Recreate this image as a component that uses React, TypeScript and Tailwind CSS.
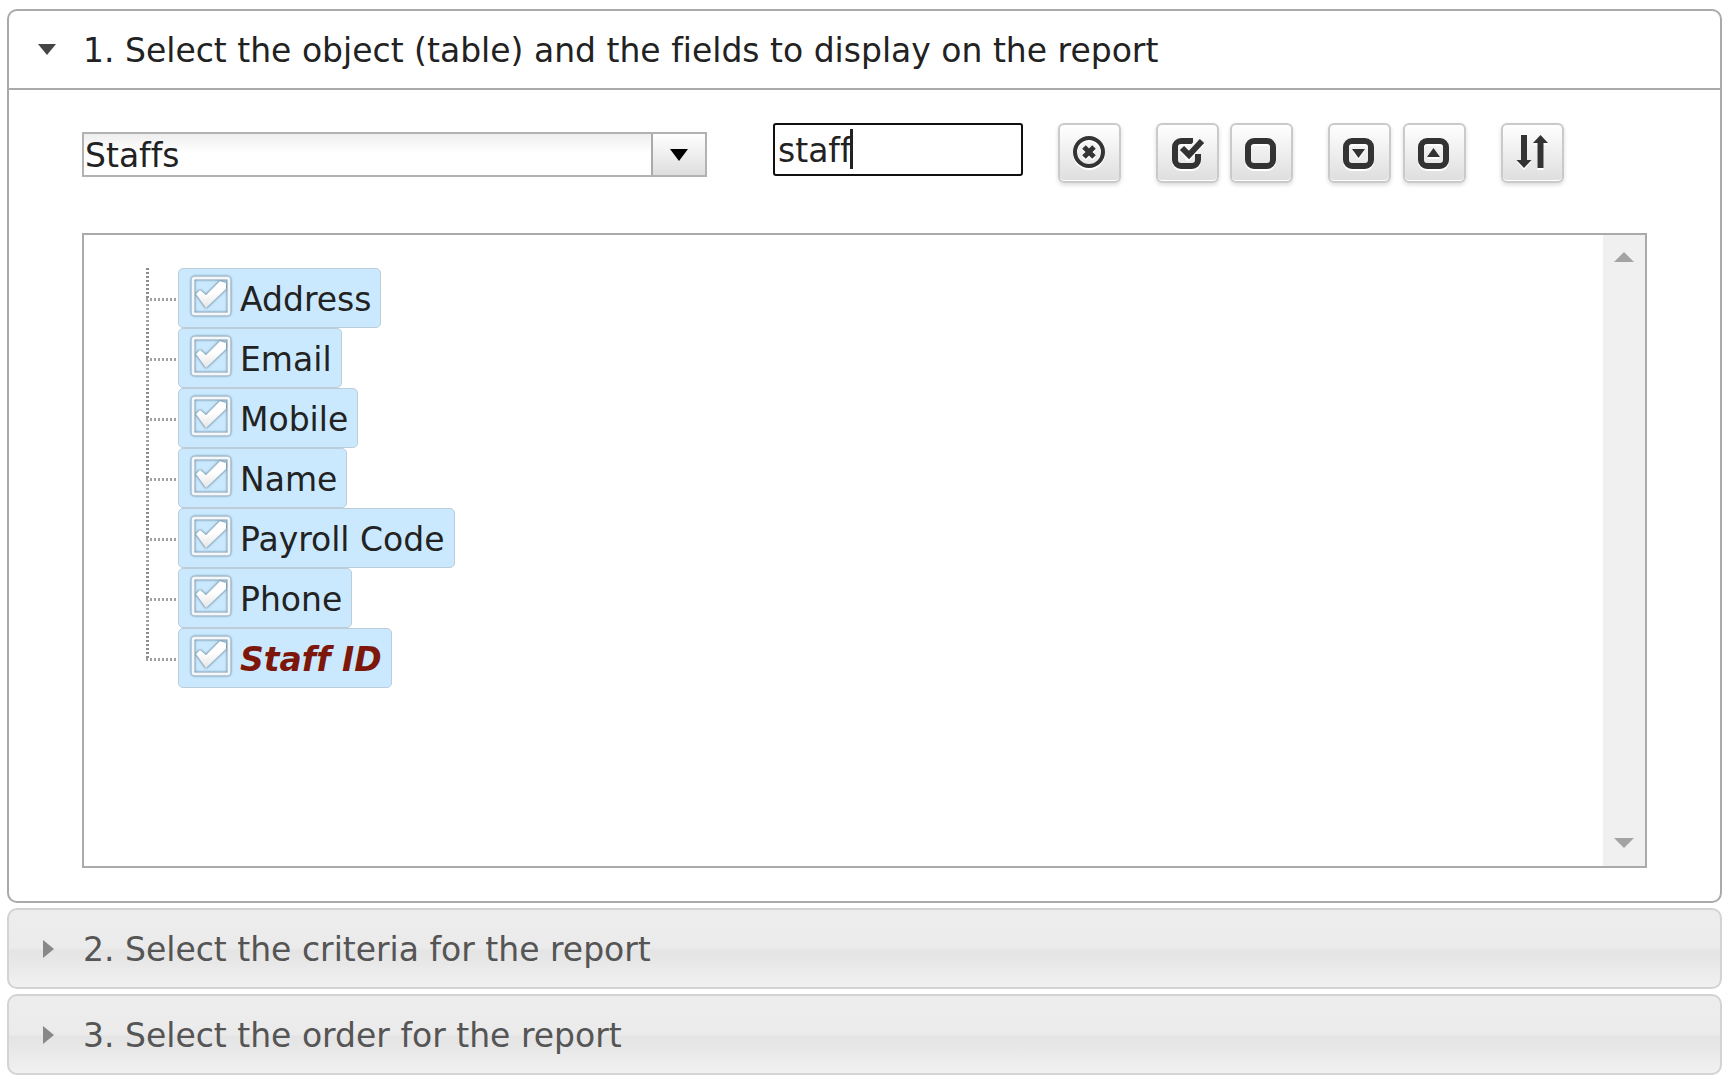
import React from "react";

const ink = "#333333";

function IconButton({ label, className = "", children }: { label: string; className?: string; children: React.ReactNode }) {
  return (
    <button
      type="button"
      aria-label={label}
      className={`flex h-[60px] w-[63px] shrink-0 items-center justify-center rounded-md border-2 border-[#cacaca] bg-linear-to-b from-white to-[#dedede] shadow-[inset_0_-1px_0_#fff,0_2px_4px_rgba(0,0,0,0.14)] ${className}`}
    >
      <svg viewBox="1 0 36 36" className="h-9 w-9 overflow-visible [filter:drop-shadow(0_2px_0_#fff)]" fill="none" stroke={ink}>
        {children}
      </svg>
    </button>
  );
}

function TreeItem({ label, last = false, keyField = false }: { label: string; last?: boolean; keyField?: boolean }) {
  return (
    <li className="flex h-[60px]">
      <svg className="h-[60px] w-[34px] shrink-0" fill="none" strokeWidth="3" aria-hidden="true">
        <path d="M3.500 0V30" stroke="#8c8c8c" strokeDasharray="2 2" />
        {!last && <path d="M3.500 32V60" stroke="#a0a0a0" strokeDasharray="2 2" />}
        <path d="M2 31.500H34" stroke="#a0a0a0" strokeDasharray="2 2" />
      </svg>
      <label className="flex h-[60px] cursor-pointer items-center rounded-[5px] border border-[#bbcdd9] bg-[#cbe9fe] pr-[9px] pl-[11px]">
        <input type="checkbox" defaultChecked className="peer sr-only" />
        <svg viewBox="0 0 42 42" className="mr-2 mb-1 h-[42px] w-[42px] overflow-visible" fill="none" aria-hidden="true">
          <defs>
            <linearGradient id="tick" x1="0" y1="0" x2="0" y2="1">
              <stop offset="0.4" stopColor="#ffffff" />
              <stop offset="1" stopColor="#e6e6e6" />
            </linearGradient>
          </defs>
          <g className="[filter:drop-shadow(0_0_1px_#5f7f97)_drop-shadow(0_0_1px_#8fb0c6)]">
            <rect x="3" y="3" width="36" height="36" rx="2" stroke="#f4f6f7" strokeWidth="3" />
            <path d="M6 19L10 15L16 20L30 6L36 8V14L16 33Z" fill="url(#tick)" />
          </g>
        </svg>
        <span className={keyField ? "mt-1 font-bold italic text-[#7d170b]" : "mt-1"}>{label}</span>
      </label>
    </li>
  );
}

function ClosedSection({ title }: { title: string }) {
  return (
    <section className="mt-[5px]">
      <h3>
        <button
          type="button"
          aria-expanded="false"
          className="flex h-[81px] w-full items-center rounded-[10px] border-2 border-[#d3d3d3] pl-[34px] text-left text-[#555555] [background-image:linear-gradient(#ededed_0%,#ebebeb_49%,#e4e4e4_53%,#e7e7e7_65%,#f1f1f1_100%)]"
        >
          <svg className="mr-[29px] h-[18px] w-[11px]" viewBox="0 0 11 18" aria-hidden="true">
            <path d="M0 0L11 9L0 18Z" fill="#888888" />
          </svg>
          <span className="pt-[2px]">{title}</span>
        </button>
      </h3>
    </section>
  );
}

export default function App() {
  return (
    <main className="bg-white pt-[9px] pr-2 pl-[7px] font-['DejaVu_Sans',sans-serif] text-[33px] leading-10 text-[#222222] [font-variant-ligatures:none]">
      <section className="rounded-[10px] border-2 border-[#aaaaaa]">
        <h3>
          <button type="button" aria-expanded="true" className="flex h-[79px] w-full items-center border-b-2 border-[#aaaaaa] pl-[29px] text-left">
            <svg className="mr-[27px] h-[11px] w-[18px]" viewBox="0 0 18 11" aria-hidden="true">
              <path d="M0 0H18L9 11Z" fill="#454545" />
            </svg>
            <span className="pt-[2px]">1. Select the object (table) and the fields to display on the report</span>
          </button>
        </h3>
        <div className="px-[73px] pt-[33px] pb-[33px]">
          <div className="flex items-start">
            <div className="relative mt-[9px] w-[625px] shrink-0">
              <select
                aria-label="Object"
                className="h-[45px] w-full appearance-none border-2 border-[#b2b2b2] bg-linear-to-b from-[#eeeeee] to-white to-45% pt-[2px] pl-[1px] leading-10 outline-none"
              >
                <option>Staffs</option>
              </select>
              <span className="pointer-events-none absolute top-[2px] right-[2px] flex h-[41px] w-[54px] items-center justify-center border-l-2 border-[#aaaaaa] bg-linear-to-b from-white to-[#dedede]">
                <svg className="h-3 w-[18px]" viewBox="0 0 18 12" aria-hidden="true">
                  <path d="M0 0H18L9 12Z" fill="#000000" />
                </svg>
              </span>
            </div>
            <div className="relative ml-[66px] w-[250px] shrink-0">
              <input
                aria-label="Filter fields"
                defaultValue="staff"
                className="block h-[53px] w-full rounded-[3px] border-2 border-[#101010] px-[3px] pt-[2px] outline-none"
              />
              <span className="pointer-events-none absolute top-[6px] left-[77px] h-10 w-[3px] bg-[#222222]" aria-hidden="true" />
            </div>
            <IconButton label="Clear filter" className="ml-[35px]">
              <circle cx="18" cy="17" r="14" strokeWidth="4" />
              <path d="M13 12L23 22M23 12L13 22" strokeWidth="5" />
            </IconButton>
            <IconButton label="Select all" className="ml-[35px]">
              <path d="M24 6H12A6 6 0 0 0 6 12V25A6 6 0 0 0 12 31H23A6 6 0 0 0 29 25V19" strokeWidth="6" />
              <path d="M15 12L19 18L33 4" strokeWidth="8" stroke="#f4f4f4" />
              <path d="M13 13L20 20L33 6" strokeWidth="6" />
            </IconButton>
            <IconButton label="Clear all" className="ml-[11px]">
              <rect x="5" y="6" width="25" height="25" rx="6" strokeWidth="6" />
            </IconButton>
            <IconButton label="Expand all" className="ml-[35px]">
              <rect x="5" y="6" width="25" height="25" rx="6" strokeWidth="6" />
              <path d="M11 14H24L17.500 23Z" fill={ink} stroke="none" />
            </IconButton>
            <IconButton label="Collapse all" className="ml-3">
              <rect x="5" y="6" width="25" height="25" rx="6" strokeWidth="6" />
              <path d="M11 22H24L17.500 13Z" fill={ink} stroke="none" />
            </IconButton>
            <IconButton label="Sort" className="ml-[35px]">
              <path d="M7 0H13V25H17.500L10 33L2.500 25H7Z" fill={ink} stroke="none" />
              <path d="M23.500 33H29.500V8H34L26.500 0L19 8H23.500Z" fill={ink} stroke="none" />
            </IconButton>
          </div>
          <div className="mt-[50px] flex border-2 border-[#aaaaaa]">
            <ul className="min-h-[631px] grow pt-[33px] pl-[60px]">
              <TreeItem label="Address" />
              <TreeItem label="Email" />
              <TreeItem label="Mobile" />
              <TreeItem label="Name" />
              <TreeItem label="Payroll Code" />
              <TreeItem label="Phone" />
              <TreeItem label="Staff ID" last keyField />
            </ul>
            <div className="flex w-[42px] flex-col items-center justify-between bg-[#f0f0f0] pt-[17px] pb-[18px]" aria-hidden="true">
              <svg className="h-[10px] w-5" viewBox="0 0 20 10">
                <path d="M0 10L10 0L20 10Z" fill="#a3a3a3" />
              </svg>
              <svg className="h-[10px] w-5" viewBox="0 0 20 10">
                <path d="M0 0L10 10L20 0Z" fill="#a3a3a3" />
              </svg>
            </div>
          </div>
        </div>
      </section>
      <ClosedSection title="2. Select the criteria for the report" />
      <ClosedSection title="3. Select the order for the report" />
    </main>
  );
}
